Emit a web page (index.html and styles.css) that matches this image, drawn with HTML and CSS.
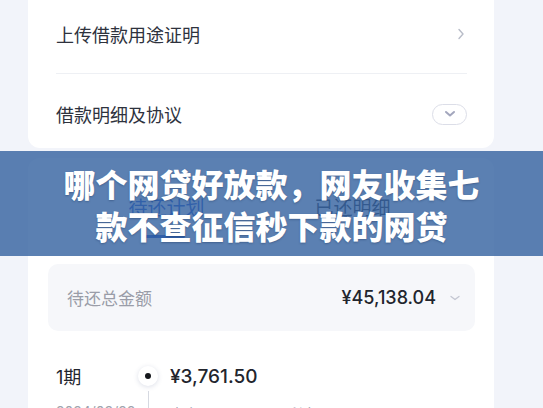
FILE: index.html
```html
<!DOCTYPE html>
<html lang="zh-CN">
<head>
    <meta charset="UTF-8">
    <meta name="viewport" content="width=device-width, initial-scale=1.0">
    <title>借款详情</title>
    <link rel="stylesheet" href="styles.css">
</head>
<body>
    <div class="page">
        <!-- Loan info card -->
        <div class="card card-top">
            <div class="row row-first">
                <span class="row-title">上传借款用途证明</span>
                <svg class="chevron-right" width="8" height="12" viewBox="0 0 8 12"><path d="M2 1.5 L6 6 L2 10.5" fill="none" stroke="#b8bcc8" stroke-width="1.4" stroke-linecap="round" stroke-linejoin="round"/></svg>
            </div>
            <div class="row row-second">
                <span class="row-title">借款明细及协议</span>
                <span class="toggle-pill">
                    <svg width="12" height="8" viewBox="0 0 12 8"><path d="M2 2 L6 5.5 L10 2" fill="none" stroke="#a3a6bd" stroke-width="2" stroke-linecap="round" stroke-linejoin="round"/></svg>
                </span>
            </div>
        </div>

        <!-- Repayment card -->
        <div class="card card-plan">
            <div class="tabs">
                <div class="tab active">待还计划</div>
                <div class="tab">已还明细</div>
            </div>

            <div class="summary">
                <span class="summary-label">待还总金额</span>
                <span class="summary-value">
                    ¥45,138.04
                    <svg width="12" height="8" viewBox="0 0 12 8"><path d="M2 2.5 L6 5.5 L10 2.5" fill="none" stroke="#c4c7d2" stroke-width="1.3" stroke-linecap="round" stroke-linejoin="round"/></svg>
                </span>
            </div>

            <div class="timeline">
                <div class="period">
                    <div class="period-label">1期</div>
                    <div class="period-dot"><span></span></div>
                    <div class="period-amount">¥3,761.50</div>
                </div>
                <div class="period-sub">
                    <div class="period-date">2024/03/28</div>
                    <div class="period-line"></div>
                    <div class="period-detail">本金 ¥3,580.00 &nbsp;&nbsp;&nbsp; 利息 ¥181.50</div>
                </div>
            </div>
        </div>
    </div>

    <!-- Title banner -->
    <div class="banner">
        哪个网贷好放款，网友收集七<br>款不查征信秒下款的网贷
    </div>
</body>
</html>
```

FILE: styles.css
```css
body {
    margin: 0;
    height: 408px;
    overflow: hidden;
    background: #f2f4fa;
    font-family: "Inter", "Noto Sans CJK SC", sans-serif;
    color: #2b2f3a;
}

.page {
    padding-left: 28px;
}

.card {
    width: 466px;
    background: #ffffff;
}

/* Top card */
.card-top {
    border-radius: 0 0 12px 12px;
    padding: 0 27px 0 28px;
    box-sizing: border-box;
}

.row {
    display: flex;
    align-items: center;
    justify-content: space-between;
}

.row-first {
    height: 74px;
    padding-bottom: 6px;
    box-sizing: border-box;
    border-bottom: 1px solid #eef0f4;
}

.row-second {
    height: 74px;
    padding-top: 6px;
    box-sizing: border-box;
}

.row-title {
    font-size: 18px;
    color: #2e323d;
}

.chevron-right {
    margin-right: 2px;
}

.toggle-pill {
    width: 33px;
    height: 19px;
    border: 1px solid #dcdee8;
    border-radius: 11px;
    display: flex;
    align-items: center;
    justify-content: center;
}

/* Plan card */
.card-plan {
    margin-top: 10px;
    border-radius: 12px 12px 0 0;
    padding: 40px 19px 0 20px;
    box-sizing: border-box;
    height: 260px;
}

.tabs {
    display: flex;
    justify-content: center;
    gap: 110px;
    margin-left: -4px;
}

.tab {
    font-size: 19px;
    line-height: 22px;
    color: #3a3f4b;
    padding-bottom: 18px;
    position: relative;
}

.tab.active {
    color: #2d62d2;
}

.tab.active::after {
    content: "";
    position: absolute;
    left: 17px;
    width: 40px;
    bottom: 0;
    height: 3px;
    border-radius: 2px;
    background: #2d62d2;
}

.summary {
    margin-top: 26px;
    height: 67px;
    background: #f6f7fa;
    border-radius: 10px;
    display: flex;
    align-items: center;
    justify-content: space-between;
    padding: 0 14px 0 19px;
}

.summary-label {
    font-size: 17px;
    color: #9a9da8;
}

.summary-value {
    font-size: 18px;
    font-weight: 500;
    color: #22252d;
    display: flex;
    align-items: center;
    gap: 13px;
}

/* Timeline */
.timeline {
    padding: 32px 0 0 8px;
}

.period,
.period-sub {
    display: grid;
    grid-template-columns: 70px 24px 1fr;
    column-gap: 10px;
    align-items: center;
}

.period-label {
    font-size: 18px;
    color: #22252d;
}

.period-dot {
    width: 20px;
    height: 20px;
    border-radius: 50%;
    background: #fff;
    box-shadow: 0 1px 5px rgba(60, 80, 130, 0.18);
    display: flex;
    align-items: center;
    justify-content: center;
    justify-self: center;
}

.period-dot span {
    width: 6px;
    height: 6px;
    border-radius: 50%;
    background: #15171c;
}

.period-amount {
    font-size: 19px;
    font-weight: 500;
    color: #22252d;
}

.period-sub {
    margin-top: 2px;
    align-items: start;
}

.period-date,
.period-detail {
    font-size: 14px;
    color: #a0a3ad;
    padding-top: 12px;
}

.period-line {
    width: 1px;
    height: 40px;
    background: #d6d9e1;
    justify-self: center;
}

/* Banner */
.banner {
    position: absolute;
    top: 151px;
    left: 0;
    right: 0;
    height: 105px;
    box-sizing: border-box;
    padding-top: 11px;
    background: rgba(50, 96, 159, 0.8);
    color: #ffffff;
    font-family: "Noto Sans CJK SC", sans-serif;
    font-weight: 900;
    font-size: 32px;
    line-height: 42px;
    text-align: center;
    text-shadow: 0 1px 2px rgba(20, 40, 80, 0.35);
}
```
